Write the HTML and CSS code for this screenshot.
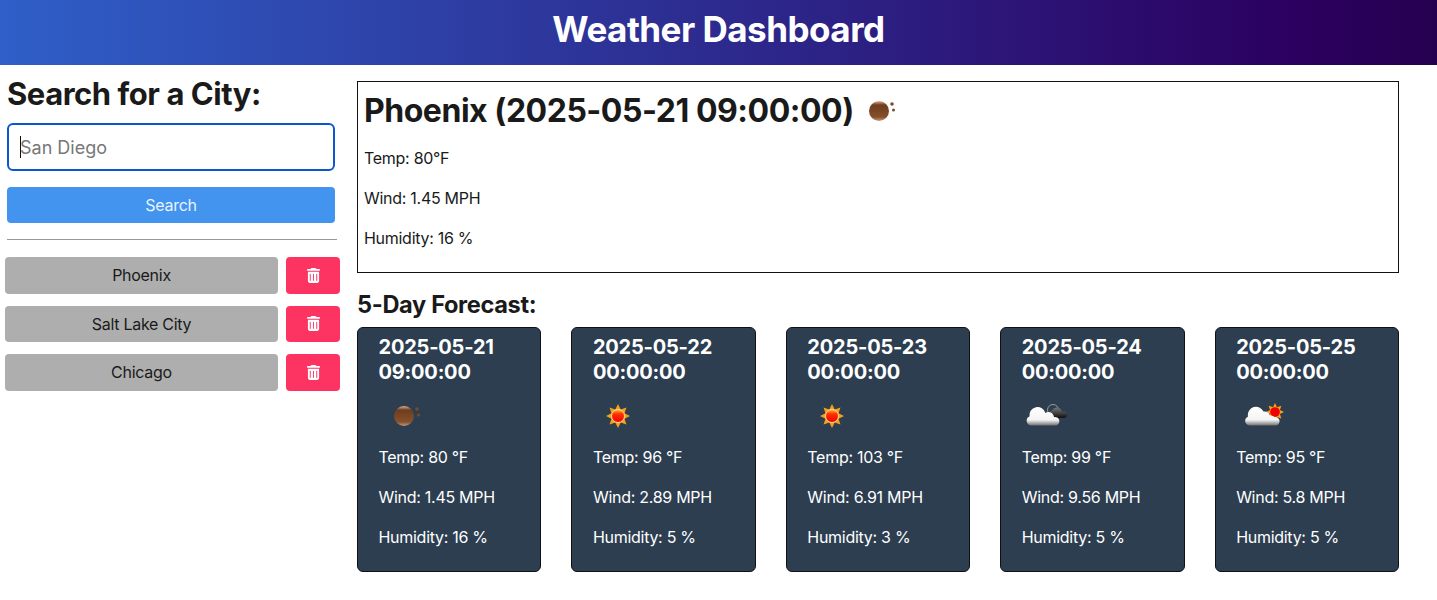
FILE: index.html
```html
<!DOCTYPE html>
<html lang="en">
<head>
    <meta charset="UTF-8">
    <title>Weather Dashboard</title>
    <link rel="stylesheet" href="styles.css">
</head>
<body>
    <svg class="defs" width="0" height="0" aria-hidden="true">
        <defs>
            <linearGradient id="brown" x1="0" y1="0" x2="0" y2="1">
                <stop offset="0" stop-color="#e0b090"/>
                <stop offset="0.2" stop-color="#6e3d1e"/>
                <stop offset="0.8" stop-color="#85502c"/>
                <stop offset="1" stop-color="#c49a7c"/>
            </linearGradient>
            <linearGradient id="red" x1="0" y1="0" x2="0" y2="1">
                <stop offset="0" stop-color="#ffc030"/>
                <stop offset="0.35" stop-color="#ff3000"/>
                <stop offset="1" stop-color="#f00000"/>
            </linearGradient>
            <linearGradient id="white" x1="0" y1="0" x2="0" y2="1">
                <stop offset="0" stop-color="#fff"/>
                <stop offset="0.7" stop-color="#f4f4f4"/>
                <stop offset="1" stop-color="#707070"/>
            </linearGradient>
            <linearGradient id="dark" x1="0" y1="0" x2="0" y2="1">
                <stop offset="0" stop-color="#777"/>
                <stop offset="1" stop-color="#111"/>
            </linearGradient>
            <polygon id="rays" fill="#f7a11a" points="20,3 22.700,8.500 28.500,6.500 26.500,12.300 32,15 26.500,17.700 28.500,23.500 22.700,21.500 20,27 17.300,21.500 11.500,23.500 13.500,17.700 8,15 13.500,12.300 11.500,6.500 17.300,8.500"/>
            <symbol id="moon" viewBox="0 0 40 30">
                <circle cx="15" cy="15" r="10" fill="url(#brown)"/>
                <circle cx="28" cy="8" r="1.800" fill="#7a4a2a"/>
                <circle cx="29.500" cy="14" r="1.500" fill="#7a4a2a"/>
            </symbol>
            <symbol id="sun" viewBox="0 0 40 30">
                <use href="#rays"/>
                <circle cx="20" cy="15" r="6.500" fill="url(#red)" stroke="#ffd9a0" stroke-width="1"/>
            </symbol>
            <symbol id="cloud-night" viewBox="0 0 50 30">
                <circle cx="31" cy="9" r="5.500" fill="none" stroke="#999" stroke-width="1"/>
                <path d="M31 17A4 4 0 0 1 30 9.200A5.500 5.500 0 0 1 40 10.500h2.500A3.300 3.300 0 0 1 42.500 17Z" fill="url(#dark)"/>
                <path d="M9 24.500A4.700 4.700 0 0 1 7.500 15.500A8.200 8.200 0 0 1 23.500 12A5.500 5.500 0 0 1 32 16A4.300 4.300 0 0 1 34 24.500Z" fill="url(#white)"/>
            </symbol>
            <symbol id="cloud-sun" viewBox="0 0 50 30">
                <g transform="translate(39 11) scale(.75) translate(-20 -15)">
                    <use href="#rays"/>
                    <circle cx="20" cy="15" r="6.500" fill="#f00000"/>
                </g>
                <path d="M13.500 24.500A4.700 4.700 0 0 1 12 15.500A8.200 8.200 0 0 1 27.500 10.500A6 6 0 0 1 34 14.500A5 5 0 0 1 38.500 16A4.300 4.300 0 0 1 40 24.500Z" fill="url(#white)"/>
            </symbol>
            <symbol id="trash" viewBox="0 0 448 512">
                <path fill="currentColor" d="M135 18C139 7 150 0 162 0h124c12 0 23 7 27 18l9 14h96c18 0 32 14 32 32s-14 32-32 32H30C12 96-2 82-2 64s14-32 32-32h96zM32 128h384v320c0 35-29 64-64 64H96c-35 0-64-29-64-64zm80 64c-9 0-16 7-16 16v224c0 9 7 16 16 16s16-7 16-16V208c0-9-7-16-16-16zm112 0c-9 0-16 7-16 16v224c0 9 7 16 16 16s16-7 16-16V208c0-9-7-16-16-16zm112 0c-9 0-16 7-16 16v224c0 9 7 16 16 16s16-7 16-16V208c0-9-7-16-16-16z"/>
            </symbol>
        </defs>
    </svg>

    <header class="page-header">
        <h1>Weather Dashboard</h1>
    </header>

    <div class="layout">
        <aside class="sidebar">
            <h2 class="search-title">Search for a City:</h2>
            <div class="input-wrap">
                <input class="city-input" type="text" placeholder="San Diego">
                <span class="caret"></span>
            </div>
            <button class="search-btn">Search</button>
            <hr class="divider">
            <ul class="history">
                <li class="history-row">
                    <button class="city-btn">Phoenix</button>
                    <button class="delete-btn"><svg class="trash"><use href="#trash"/></svg></button>
                </li>
                <li class="history-row">
                    <button class="city-btn">Salt Lake City</button>
                    <button class="delete-btn"><svg class="trash"><use href="#trash"/></svg></button>
                </li>
                <li class="history-row">
                    <button class="city-btn">Chicago</button>
                    <button class="delete-btn"><svg class="trash"><use href="#trash"/></svg></button>
                </li>
            </ul>
        </aside>

        <main class="content">
            <section class="current">
                <h2 class="current-title">Phoenix (2025-05-21 09:00:00) <svg class="current-icon"><use href="#moon"/></svg></h2>
                <p>Temp: 80°F</p>
                <p>Wind: 1.45 MPH</p>
                <p>Humidity: 16 %</p>
            </section>

            <h3 class="forecast-title">5-Day Forecast:</h3>
            <div class="cards">
                <article class="card">
                    <h4>2025-05-21 09:00:00</h4>
                    <svg class="card-icon moon"><use href="#moon"/></svg>
                    <p>Temp: 80 °F</p>
                    <p>Wind: 1.45 MPH</p>
                    <p>Humidity: 16 %</p>
                </article>
                <article class="card">
                    <h4>2025-05-22 00:00:00</h4>
                    <svg class="card-icon"><use href="#sun"/></svg>
                    <p>Temp: 96 °F</p>
                    <p>Wind: 2.89 MPH</p>
                    <p>Humidity: 5 %</p>
                </article>
                <article class="card">
                    <h4>2025-05-23 00:00:00</h4>
                    <svg class="card-icon"><use href="#sun"/></svg>
                    <p>Temp: 103 °F</p>
                    <p>Wind: 6.91 MPH</p>
                    <p>Humidity: 3 %</p>
                </article>
                <article class="card">
                    <h4>2025-05-24 00:00:00</h4>
                    <svg class="card-icon wide"><use href="#cloud-night"/></svg>
                    <p>Temp: 99 °F</p>
                    <p>Wind: 9.56 MPH</p>
                    <p>Humidity: 5 %</p>
                </article>
                <article class="card">
                    <h4>2025-05-25 00:00:00</h4>
                    <svg class="card-icon wide"><use href="#cloud-sun"/></svg>
                    <p>Temp: 95 °F</p>
                    <p>Wind: 5.8 MPH</p>
                    <p>Humidity: 5 %</p>
                </article>
            </div>
        </main>
    </div>
</body>
</html>
```

FILE: styles.css
```css
*{
    box-sizing: border-box;
    margin: 0;
    padding: 0;
}

body{
    font-family: Inter, "Noto Sans", sans-serif;
    font-size: 16px;
    letter-spacing: -0.28px;
    color: #1a1a1a;
    background: #fff;
}

.defs{
    position: absolute;
}

.page-header{
    height: 65px;
    padding-bottom: 8px;
    display: flex;
    align-items: center;
    justify-content: center;
    background: linear-gradient(90deg, #2f5fc8 0%, #2b0060 90%, #260050 100%);
}

.page-header h1{
    font-size: 35px;
    font-weight: 700;
    letter-spacing: -0.5px;
    color: #fff;
}

.layout{
    display: flex;
    padding: 0 38px 0 5px;
}

.sidebar{
    width: 335px;
    flex-shrink: 0;
    padding-top: 11px;
}

.search-title{
    font-size: 31px;
    line-height: 36px;
    font-weight: 700;
    letter-spacing: -0.46px;
    margin-left: 2px;
}

.input-wrap{
    position: relative;
    width: 328px;
    margin: 11px 0 16px 2px;
}

.city-input{
    display: block;
    width: 100%;
    height: 48px;
    padding: 0 11px;
    font-family: inherit;
    font-size: 18px;
    border: 2px solid #0b57d0;
    border-radius: 6px;
    outline: none;
}

.city-input::placeholder{
    color: #777;
}

.caret{
    position: absolute;
    left: 13px;
    top: 13px;
    width: 1px;
    height: 22px;
    background: #111;
}

.search-btn{
    display: block;
    width: 328px;
    height: 36px;
    margin-left: 2px;
    font-family: inherit;
    font-size: 16px;
    letter-spacing: inherit;
    color: #e8f2fd;
    background: #4294ee;
    border: none;
    border-radius: 4px;
}

.divider{
    width: 330px;
    margin: 16px 0 17px 2px;
    border: none;
    border-top: 1px solid #999;
}

.history{
    list-style: none;
    display: flex;
    flex-direction: column;
    gap: 12px;
}

.history-row{
    display: flex;
    gap: 8px;
    height: 36.500px;
}

.city-btn{
    width: 273px;
    font-family: inherit;
    font-size: 16px;
    letter-spacing: inherit;
    color: #1a1a1a;
    background: #aeaeae;
    border: none;
    border-radius: 4px;
}

.delete-btn{
    width: 54px;
    display: flex;
    align-items: center;
    justify-content: center;
    color: #fff;
    background: #fd3462;
    border: none;
    border-radius: 4px;
}

.trash{
    width: 13px;
    height: 15px;
}

.content{
    flex: 1;
    margin-left: 17px;
    padding-top: 16px;
}

.current{
    height: 192px;
    padding: 7px 6px 6px;
    border: 1px solid #111;
}

.current-title{
    display: flex;
    align-items: center;
    gap: 10px;
    font-size: 32px;
    line-height: 44px;
    font-weight: 700;
    letter-spacing: -0.47px;
    margin-bottom: 15px;
}

.current-icon{
    width: 40px;
    height: 30px;
}

.current p{
    line-height: 20px;
    margin-bottom: 20px;
}

.forecast-title{
    font-size: 23.600px;
    line-height: 26px;
    font-weight: 700;
    letter-spacing: -0.35px;
    margin: 19px 0 9px;
}

.cards{
    display: flex;
    gap: 30px;
}

.card{
    flex: 1;
    height: 245px;
    padding: 7px 20.500px;
    color: #fff;
    background: #2c3e50;
    border: 1px solid #111;
    border-radius: 6px;
}

.card h4{
    font-size: 20px;
    line-height: 25px;
    font-weight: 700;
    letter-spacing: -0.2px;
}

.card-icon{
    display: block;
    width: 40px;
    height: 30px;
    margin: 16px 0 16px 5px;
}

.card-icon.moon{
    margin-left: 10px;
}

.card-icon.wide{
    width: 50px;
    margin-left: 0;
}

.card p{
    line-height: 20px;
    margin-bottom: 20px;
}
```
